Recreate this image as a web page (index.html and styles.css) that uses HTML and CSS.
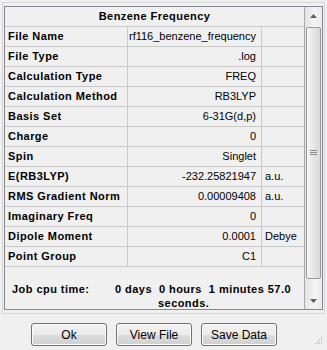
FILE: index.html
```html
<!DOCTYPE html>
<html lang="en">

<head>
      <meta charset="UTF-8">
      <title>Benzene Frequency</title>
      <link rel="stylesheet" href="styles.css">
</head>

<body>
      <div class="window">
            <div class="frame">
                  <div class="gridbox">
                        <div class="sheet">
                              <div class="grid">
                                    <div class="cell title">Benzene Frequency</div>

                                    <div class="cell label">File Name</div>
                                    <div class="cell value">rf116_benzene_frequency</div>
                                    <div class="cell unit"></div>

                                    <div class="cell label">File Type</div>
                                    <div class="cell value">.log</div>
                                    <div class="cell unit"></div>

                                    <div class="cell label">Calculation Type</div>
                                    <div class="cell value">FREQ</div>
                                    <div class="cell unit"></div>

                                    <div class="cell label">Calculation Method</div>
                                    <div class="cell value">RB3LYP</div>
                                    <div class="cell unit"></div>

                                    <div class="cell label">Basis Set</div>
                                    <div class="cell value">6-31G(d,p)</div>
                                    <div class="cell unit"></div>

                                    <div class="cell label">Charge</div>
                                    <div class="cell value">0</div>
                                    <div class="cell unit"></div>

                                    <div class="cell label">Spin</div>
                                    <div class="cell value">Singlet</div>
                                    <div class="cell unit"></div>

                                    <div class="cell label">E(RB3LYP)</div>
                                    <div class="cell value">-232.25821947</div>
                                    <div class="cell unit">a.u.</div>

                                    <div class="cell label">RMS Gradient Norm</div>
                                    <div class="cell value">0.00009408</div>
                                    <div class="cell unit">a.u.</div>

                                    <div class="cell label">Imaginary Freq</div>
                                    <div class="cell value">0</div>
                                    <div class="cell unit"></div>

                                    <div class="cell label">Dipole Moment</div>
                                    <div class="cell value">0.0001</div>
                                    <div class="cell unit">Debye</div>

                                    <div class="cell label">Point Group</div>
                                    <div class="cell value">C1</div>
                                    <div class="cell unit"></div>
                              </div>

                              <!-- job time, wraps onto a second line -->
                              <div class="jobtime">
                                    <span class="jobLabel">Job cpu time:</span>
                                    <div class="jobValue">
                                          <div>0 days&nbsp; 0 hours&nbsp; 1 minutes 57.0</div>
                                          <div class="jobSeconds">seconds.</div>
                                    </div>
                              </div>
                        </div>

                        <div class="scrollbar">
                              <div class="scrollBtn">
                                    <svg width="7" height="4" viewBox="0 0 7 4"><path d="M0 4 L3.5 0 L7 4 Z" fill="#5e5e5e"/></svg>
                              </div>
                              <div class="track">
                                    <div class="thumb">
                                          <svg width="7" height="6" viewBox="0 0 7 6">
                                                <path d="M0 0.5 H7 M0 2.5 H7 M0 4.5 H7" stroke="#8a8a8a" stroke-width="1"/>
                                          </svg>
                                    </div>
                              </div>
                              <div class="scrollBtn">
                                    <svg width="7" height="4" viewBox="0 0 7 4"><path d="M0 0 L3.5 4 L7 0 Z" fill="#5e5e5e"/></svg>
                              </div>
                        </div>
                  </div>
            </div>

            <div class="buttons">
                  <button class="btn" type="button">Ok</button>
                  <button class="btn" type="button">View File</button>
                  <button class="btn" type="button">Save Data</button>
            </div>

            <!-- resize grip in the corner -->
            <svg class="grip" width="8" height="8" viewBox="0 0 8 8">
                  <g fill="#b4b4b4">
                        <rect x="6" y="0" width="1" height="1"/>
                        <rect x="4" y="2" width="1" height="1"/>
                        <rect x="6" y="2" width="1" height="1"/>
                        <rect x="2" y="4" width="1" height="1"/>
                        <rect x="4" y="4" width="1" height="1"/>
                        <rect x="6" y="4" width="1" height="1"/>
                        <rect x="0" y="6" width="1" height="1"/>
                        <rect x="2" y="6" width="1" height="1"/>
                        <rect x="4" y="6" width="1" height="1"/>
                        <rect x="6" y="6" width="1" height="1"/>
                  </g>
            </svg>
      </div>
</body>

</html>
```
FILE: styles.css
```css
/* Window */
body {
      margin: 0;
      background-color: #f0f0f0;
      font-family: "Liberation Sans", Arial, sans-serif;
      font-size: 11px;
      color: #000;
}

.window {
      position: relative;
      width: 327px;
      height: 350px;
      padding-top: 2px;
      padding-left: 2px;
      box-sizing: border-box;
}

/* Outer group frame */
.frame {
      width: 323px;
      box-sizing: border-box;
      border: 1px solid #d5d5d5;
      padding: 3px 1px 3px 1px;
}

/* Grid with its own scrollbar */
.gridbox {
      display: flex;
      height: 304px;
      box-sizing: border-box;
      border: 1px solid #828790;
      overflow: hidden;
}

.sheet {
      width: 300px;
      overflow: hidden;
}

.grid {
      display: grid;
      grid-template-columns: 123px 134px 43px;
}

.cell {
      height: 20px;
      line-height: 19px;
      box-sizing: border-box;
      border-right: 1px solid #c8c8c8;
      border-bottom: 1px solid #c8c8c8;
      white-space: nowrap;
      overflow: hidden;
}

/* bold text of the old dialog font runs a bit wider */
.title,
.label,
.jobtime {
      font-weight: bold;
      letter-spacing: 0.45px;
}

.title {
      grid-column: 1 / 4;
      text-align: center;
}

.label {
      padding-left: 3px;
}

.value {
      text-align: right;
      padding-right: 5px;
}

.unit {
      padding-left: 3px;
}

/* Job cpu time row */
.jobtime {
      display: flex;
      padding-top: 15px;
      line-height: 14px;
}

.jobLabel {
      width: 103px;
      padding-left: 7px;
}

.jobSeconds {
      padding-left: 43px;
}

/* Scrollbar */
.scrollbar {
      display: flex;
      flex-direction: column;
      width: 17px;
      border-left: 1px solid #a9a9a9;
      background: linear-gradient(to right, #e4e4e4, #f4f4f4 60%, #eaeaea);
}

.scrollBtn {
      height: 17px;
      display: flex;
      align-items: center;
      justify-content: center;
}

.track {
      flex: 1;
      padding: 3px 0 13px 0;
}

.thumb {
      height: 100%;
      margin: 0 1px;
      box-sizing: border-box;
      border: 1px solid #9a9a9a;
      border-radius: 2px;
      background: linear-gradient(to right, #f6f6f6, #e6e6e6 50%, #d9d9d9);
      display: flex;
      align-items: center;
      justify-content: center;
}

/* Buttons */
.buttons {
      display: flex;
      gap: 9px;
      padding-left: 29px;
      margin-top: 9px;
}

.btn {
      width: 76px;
      height: 23px;
      padding: 0;
      border: 1px solid #707070;
      border-radius: 3px;
      background: linear-gradient(to bottom, #f2f2f2, #ebebeb 50%, #dddddd 51%, #cfcfcf);
      box-shadow: inset 0 0 0 1px #fcfcfc;
      font-family: "Liberation Sans", Arial, sans-serif;
      font-size: 12px;
      color: #000;
}

.grip {
      position: absolute;
      right: 4px;
      bottom: 5px;
}
```
